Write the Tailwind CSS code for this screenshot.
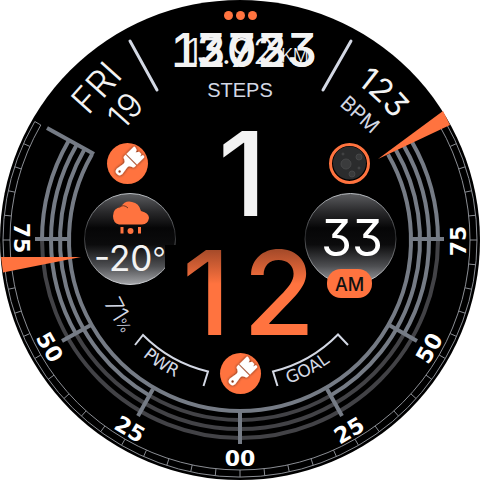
<!DOCTYPE html>
<html lang="en">
<head>
<meta charset="utf-8">
<title>Watch face</title>
<script src="https://cdn.jsdelivr.net/npm/@tailwindcss/browser@4"></script>
</head>
<body class="bg-white">
<main class="mx-auto w-full max-w-[100vh]">
<svg viewBox="0 0 480 480" role="img" aria-label="Watch face" class="block w-full font-['Inter',sans-serif] [font-feature-settings:'cv09']">
  <defs>
    <linearGradient id="glass" x1="0" y1="0" x2="0" y2="1">
      <stop offset="0" stop-color="#5c5d60"/>
      <stop offset=".2" stop-color="#29292b"/>
      <stop offset=".38" stop-color="#060607"/>
      <stop offset=".56" stop-color="#0b0b0c"/>
      <stop offset=".8" stop-color="#4e4f52"/>
      <stop offset="1" stop-color="#a4a5a8"/>
    </linearGradient>
    <linearGradient id="rim" x1="0" y1="0" x2="0" y2="1">
      <stop offset="0" stop-color="#b9bdc2"/>
      <stop offset=".45" stop-color="#2a2b2d"/>
      <stop offset="1" stop-color="#d0d2d6"/>
    </linearGradient>
    <linearGradient id="minute" gradientUnits="userSpaceOnUse" x1="0" y1="248" x2="0" y2="284">
      <stop offset="0" stop-color="#a04828"/>
      <stop offset="1" stop-color="#ff733f"/>
    </linearGradient>
    <filter id="shade" x="-30%" y="-30%" width="160%" height="160%">
      <feDropShadow dx="0" dy="0" stdDeviation="1.5" flood-color="#000" flood-opacity=".75"/>
    </filter>
    <path id="heartArc" d="M353 81 A195 195 0 0 1 418 158"/>
    <path id="lowArc" d="M104 303 A150 150 0 0 0 376 303"/>
    <path id="labelArc" d="M108 315 A152 152 0 0 0 372 315"/>
    <g id="brush" filter="url(#shade)" fill="#fff">
      <g transform="rotate(45)">
        <path d="M-7.500 -6 V-16 Q-7.500 -17 -6 -17 L-3 -16 L-2 -13.500 L0 -16.500 L3 -16.500 L4 -14 L5 -17 Q7.500 -17 7.500 -16 V-6 Z"/>
        <path fill-rule="evenodd" d="M-7.500 -4.700 H7.500 V-2.500 Q7.500 -1 5 -.500 Q2.500 .500 2.500 3 L3.800 11 Q3.800 15 0 15 Q-3.800 15 -3.800 11 L-2.500 3 Q-2.500 .500 -5 -.500 Q-7.500 -1 -7.500 -2.500 Z M0 9.800 A1.400 1.400 0 1 0 0 12.600 A1.400 1.400 0 1 0 0 9.800 Z"/>
      </g>
    </g>
  </defs>

  <circle cx="240" cy="240" r="240" fill="#000"/>

  <!-- outer minute track -->
  <g fill="none" stroke="#8b8e94" stroke-width="1">
    <path d="M34.800 121.500 A237 237 0 1 0 445.200 121.500 L439.200 125 A230 230 0 1 1 40.800 125 Z"/>
    <g id="ticks"></g>
  </g>

  <!-- gauge rings -->
  <g id="rings" fill="none" stroke-width="4"></g>
  <g stroke="#757b85" stroke-width="4">
    <path d="M47 128 L94 154"/>
    <path d="M35 239 H71 M409 239 H444"/>
    <path d="M62 341 L91 325 M417 341 L389 325"/>
    <path d="M138 416 L153 389 M342 416 L327 389"/>
    <path d="M240 411 V444"/>
  </g>

  <!-- scale numerals -->
  <g class="font-['DejaVu_Sans',sans-serif] text-[22px] font-bold" fill="#fff" text-anchor="middle">
    <text transform="translate(14 238) rotate(90)">75</text>
    <text transform="translate(466 241) rotate(-90)">75</text>
    <text transform="translate(43 351) rotate(60)">50</text>
    <text transform="translate(436 352) rotate(-60)">50</text>
    <text transform="translate(126 436) rotate(30)">25</text>
    <text transform="translate(353 437) rotate(-30)">25</text>
    <text x="240" y="466">00</text>
  </g>

  <!-- needles -->
  <g fill="#ff733f">
    <path d="M1 257 L81 257 L3 272.500 Z"/>
    <path d="M378 159 L443 111 L450 125 Z"/>
  </g>

  <!-- dividers -->
  <path d="M130 41 L157 90 M351 41 L323 90" stroke="#d3d8e4" stroke-width="3" stroke-linecap="round"/>

  <!-- steps and distance -->
  <g fill="#ff733f"><circle cx="228.500" cy="15.500" r="4.500"/><circle cx="240.500" cy="15.500" r="4.500"/><circle cx="252.500" cy="15.500" r="4.500"/></g>
  <g fill="#f3f3f3">
    <g class="text-[47px] font-medium [font-feature-settings:'cv09','tnum']">
      <text y="67"><tspan x="170">1</tspan><tspan x="196">2033</tspan></text>
      <text x="196" y="67">3723</text>
    </g>
    <text x="186" y="64" class="text-[36px] font-light">13.92</text>
    <text x="281" y="62" class="text-[18px] font-light">KM</text>
  </g>
  <text x="240" y="97" text-anchor="middle" fill="#d3d8e4" class="font-['Liberation_Sans',sans-serif] text-[20px]">STEPS</text>

  <!-- date -->
  <g fill="#f3f3f3" class="text-[36px]">
    <text transform="translate(88 116) rotate(-48)" class="font-light">FRI</text>
    <text transform="translate(123 131) rotate(-48)" class="text-[34px] font-light">19</text>
  </g>

  <!-- heart rate -->
  <text fill="#f3f3f3" class="text-[32px]"><textPath href="#heartArc" startOffset="4">123</textPath></text>
  <text transform="translate(339 105) rotate(42)" fill="#d3d8e4" class="text-[20px]">BPM</text>

  <!-- time -->
  <text x="218" y="216" fill="#f3f3f3" class="text-[117px] font-medium">1</text>
  <text y="335" fill="url(#minute)" class="text-[117px] font-medium"><tspan x="182">1</tspan><tspan x="243">2</tspan></text>

  <!-- weather -->
  <circle cx="130" cy="239" r="45.500" fill="url(#glass)" stroke="url(#rim)"/>
  <path d="M165 245 H178 V275 H165 Z" fill="#000"/>
  <g fill="#ff733f">
    <path d="M119 224.500 Q113 223 113 216 Q113 208 121 207 Q125 200 132 202 Q139 203 141 211 Q149 213 149 218 Q148 224 142 224.500 Z"/>
    <path d="M119 207 Q124 204 128 208" fill="none" stroke="#70351f"/>
    <path d="M120.500 227 H123.500 V233.500 H120.500 Z M138 227 H141 V233.500 H138 Z"/>
    <circle cx="130.500" cy="231" r="3"/>
  </g>
  <text x="94" y="271" fill="#f3f3f3" class="text-[35px]">-20<tspan class="text-[30px] font-light" dy="-2">°</tspan></text>

  <!-- seconds -->
  <circle cx="350.500" cy="239" r="45.500" fill="url(#glass)" stroke="url(#rim)"/>
  <text x="352" y="256" text-anchor="middle" fill="#fff" class="text-[50px]">33</text>
  <rect x="327" y="269" width="45" height="29" rx="14" fill="#ff733f"/>
  <text x="349.500" y="291" text-anchor="middle" fill="#111" class="text-[18px] font-medium">AM</text>

  <!-- shortcuts -->
  <circle cx="127.500" cy="163.500" r="20.500" fill="#ff733f"/>
  <use href="#brush" transform="translate(127.500 163.500)"/>
  <circle cx="240.500" cy="373.500" r="20.500" fill="#ff733f"/>
  <use href="#brush" transform="translate(240.500 373.500)"/>
  <circle cx="349.500" cy="163.500" r="19" fill="#000" stroke="#ff733f" stroke-width="3"/>
  <circle cx="349.500" cy="163" r="16.500" fill="#2b2c2d"/>
  <g fill="#3a3b3c" stroke="#464748"><circle cx="346" cy="164" r="5"/><circle cx="359" cy="157" r="3"/><circle cx="352" cy="174" r="3"/><circle cx="343" cy="154" r="1"/><circle cx="359" cy="168" r="1"/></g>

  <!-- battery and goal -->
  <g fill="#d3d8e4">
    <text class="text-[24px] font-light"><textPath href="#lowArc">71<tspan class="text-[15px]">%</tspan></textPath></text>
    <g class="font-['DejaVu_Sans',sans-serif] text-[17px]">
      <text><textPath href="#labelArc" startOffset="54">PWR</textPath></text>
      <text><textPath href="#labelArc" startOffset="209">GOAL</textPath></text>
    </g>
  </g>
  <g fill="none" stroke="#d3d8e4" stroke-width="2">
    <path d="M135 345 L143 335 A136 136 0 0 0 208 371.500 L203.500 386"/>
    <path d="M277.500 386 L273 371.500 A136 136 0 0 0 338 334.500 L348 345"/>
  </g>
</svg>
</main>
<script>
  const NS = 'http://www.w3.org/2000/svg';
  const at = (r, deg) => {
    const a = deg * Math.PI / 180;
    return (240 + r * Math.cos(a)).toFixed(2) + ' ' + (240 + r * Math.sin(a)).toFixed(2);
  };
  const add = (parent, d, stroke) => {
    const p = document.createElementNS(NS, 'path');
    p.setAttribute('d', d);
    if (stroke) p.setAttribute('stroke', stroke);
    document.getElementById(parent).appendChild(p);
  };
  for (let deg = -24; deg < 210; deg += 6) add('ticks', 'M' + at(230, deg) + ' L' + at(237, deg));
  // radius, angle where the lit part ends on the right side
  [[198, 0], [189, 30], [180, 60], [171, 90]].forEach(([r, end]) => {
    if (end < 90) add('rings', 'M' + at(r, end) + ' A' + r + ' ' + r + ' 0 0 1 ' + at(r, 180 - end), '#424246');
    add('rings', 'M' + at(r, -30) + ' A' + r + ' ' + r + ' 0 0 1 ' + at(r, end), '#757b85');
    add('rings', 'M' + at(r, 210) + ' A' + r + ' ' + r + ' 0 0 0 ' + at(r, 180 - end), '#757b85');
  });
</script>
</body>
</html>
